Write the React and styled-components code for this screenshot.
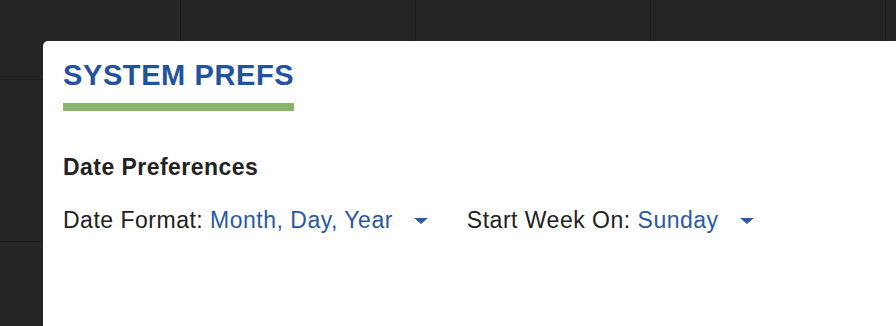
import React from "react";
import styled, { createGlobalStyle } from "styled-components";

const GlobalStyle = createGlobalStyle`
  html, body {
    margin: 0;
    padding: 0;
    background: #252525;
    overflow: hidden;
  }
  body {
    font-family: "Liberation Sans", Arial, sans-serif;
  }
`;

const Screen = styled.div`
  position: relative;
  width: 896px;
  height: 326px;
  overflow: hidden;
  background: #252525;
`;

const CalendarGrid = styled.div`
  display: grid;
  grid-template-columns: repeat(5, 235px);
  grid-auto-rows: 162px;
  margin-left: -54px;
  margin-top: -82px;
`;

const Cell = styled.div`
  border-right: 1px solid #1c1c1c;
  border-bottom: 1px solid #1c1c1c;
  box-sizing: border-box;
`;

const Panel = styled.div`
  position: absolute;
  left: 43px;
  top: 41px;
  right: -20px;
  bottom: -20px;
  background: #ffffff;
  border-radius: 5px;
  padding: 18px 20px 0;
  box-sizing: border-box;
`;

const Title = styled.h1`
  display: inline-block;
  margin: 0;
  padding-bottom: 11px;
  border-bottom: 8px solid #8bb46b;
  font-size: 29px;
  font-weight: 700;
  letter-spacing: 0.6px;
  color: #2352a0;
  line-height: 33px;
`;

const Section = styled.section`
  margin-top: 43px;
`;

const SectionTitle = styled.h2`
  margin: 0;
  font-size: 23px;
  font-weight: 700;
  letter-spacing: 0.45px;
  color: #222222;
  line-height: 26px;
`;

const Options = styled.div`
  display: flex;
  align-items: center;
  gap: 39px;
  margin-top: 27px;
`;

const Option = styled.div`
  display: flex;
  align-items: center;
  font-size: 23px;
  line-height: 26px;
  letter-spacing: 0.5px;
  color: #222222;
  white-space: pre;
`;

const Value = styled.span`
  color: #2b59a6;
`;

const Caret = styled.span`
  display: inline-block;
  width: 0;
  height: 0;
  margin-left: 21px;
  margin-top: 2px;
  border-left: 7px solid transparent;
  border-right: 7px solid transparent;
  border-top: 6px solid #2b59a6;
`;

const prefs = [
  { label: "Date Format:", value: "Month, Day, Year" },
  { label: "Start Week On:", value: "Sunday" },
];

export default function App() {
  return (
    <Screen>
      <GlobalStyle />
      <CalendarGrid>
        {Array.from({ length: 15 }).map((_, i) => (
          <Cell key={i} />
        ))}
      </CalendarGrid>
      <Panel>
        <Title>SYSTEM PREFS</Title>
        <Section>
          <SectionTitle>Date Preferences</SectionTitle>
          <Options>
            {prefs.map((p) => (
              <Option key={p.label}>
                {p.label} <Value>{p.value}</Value>
                <Caret />
              </Option>
            ))}
          </Options>
        </Section>
      </Panel>
    </Screen>
  );
}
